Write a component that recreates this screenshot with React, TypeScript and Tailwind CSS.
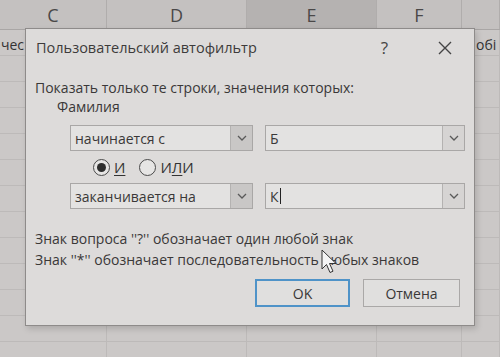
import React from "react";

const font = { fontFamily: '"Open Sans", "Noto Sans", sans-serif' };

function Chevron() {
  return (
    <svg width="10" height="6" viewBox="0 0 10 6" fill="none">
      <path d="M1 1l4 4 4-4" stroke="#5a5a5a" strokeWidth="1.3" />
    </svg>
  );
}

function Combo({ value, width, caret, dark }: { value: string; width: string; caret?: boolean; dark?: boolean }) {
  return (
    <div className={`flex h-[26px] ${width} border border-[#a9a7a6] bg-[#e3e2e1]`}>
      <div className="flex flex-1 items-center pl-[4px] text-[14px] text-[#3a3838]">
        {value}
        {caret && <span className="ml-[1px] h-[16px] w-[1px] bg-[#222]" />}
      </div>
      <div className={`flex w-[22px] items-center justify-center border-l border-[#b4b2b1] ${dark ? "bg-[#c9c7c6]" : "bg-[#d6d4d3]"}`}>
        <Chevron />
      </div>
    </div>
  );
}

function Radio({ checked, pre, u, post }: { checked?: boolean; pre: string; u: string; post: string }) {
  return (
    <div className="flex items-center gap-[4px]">
      <span className="flex h-[17px] w-[17px] items-center justify-center rounded-full border border-[#4a4a4a] bg-[#e6e5e4]">
        {checked && <span className="h-[9px] w-[9px] rounded-full bg-[#2e2e2e]" />}
      </span>
      <span className="text-[15px] text-[#333]">
        {pre}
        <span className="underline underline-offset-2">{u}</span>
        {post}
      </span>
    </div>
  );
}

export default function App() {
  const cols = [
    { w: "w-[107px]", l: "C", hl: false },
    { w: "w-[140px]", l: "D", hl: false },
    { w: "w-[130px]", l: "E", hl: true },
    { w: "w-[85px]", l: "F", hl: false },
    { w: "flex-1", l: "", hl: false },
  ];
  return (
    <div className="relative h-[357px] w-[500px] overflow-hidden bg-[#cbc8c7]" style={font}>
      {/* column headers */}
      <div className="flex h-[30px] border-b border-[#a9a6a5]">
        {cols.map((c, i) => (
          <div
            key={i}
            className={`${c.w} flex items-center justify-center border-r border-[#b0adac] pt-[2px] text-[18px] text-[#4a4848] ${c.hl ? "bg-[#b5b2b1]" : "bg-[#c4c1c0]"}`}
          >
            {c.l}
          </div>
        ))}
      </div>
      {/* sheet rows */}
      <div className="flex flex-col">
        {Array.from({ length: 14 }).map((_, r) => (
          <div key={r} className="flex h-[26px] border-b border-[#bdbab9]">
            {cols.map((c, i) => (
              <div key={i} className={`${c.w} flex items-center border-r border-[#bdbab9] text-[14px] text-[#333]`}>
                {r === 0 && i === 0 && <span className="pl-[1px] pt-[4px]">чес</span>}
                {r === 0 && i === 4 && <span className="pl-[14px] pt-[4px]">обі</span>}
              </div>
            ))}
          </div>
        ))}
      </div>

      {/* dialog */}
      <div className="absolute left-[25px] top-[28px] flex h-[298px] w-[450px] flex-col border border-[#8e8b8a] bg-[#dddbda] text-[#3a3838] shadow-[2px_3px_6px_rgba(0,0,0,0.15)]">
        <div className="flex h-[38px] items-center pl-[10px] pr-[22px]">
          <span className="flex-1 text-[14.5px] text-[#3d3b3b]">Пользовательский автофильтр</span>
          <span className="mr-[50px] text-[17px] text-[#444]">?</span>
          <svg width="14" height="14" viewBox="0 0 14 14">
            <path d="M1 1l12 12M13 1L1 13" stroke="#444" strokeWidth="1.4" />
          </svg>
        </div>
        <div className="flex flex-col px-[9px] pt-[11px]">
          <div className="text-[14px] leading-[20px]">Показать только те строки, значения которых:</div>
          <div className="pl-[22px] text-[14px] leading-[18px]">Фамилия</div>
          <div className="flex flex-col pl-[35px] pt-[9px]">
            <div className="flex gap-[12px]">
              <Combo value="начинается с" width="w-[183px]" dark />
              <Combo value="Б" width="w-[200px]" />
            </div>
            <div className="flex h-[32px] items-center gap-[14px] pl-[23px]">
              <Radio checked pre="" u="И" post="" />
              <Radio pre="И" u="Л" post="И" />
            </div>
            <div className="flex gap-[12px]">
              <Combo value="заканчивается на" width="w-[183px]" dark />
              <Combo value="К" width="w-[200px]" caret />
            </div>
          </div>
          <div className="pt-[19px] text-[14px] leading-[21px]">
            <div>Знак вопроса ''?'' обозначает один любой знак</div>
            <div>Знак ''*'' обозначает последовательность любых знаков</div>
          </div>
          <div className="flex justify-end gap-[13px] pr-[5px] pt-[9px]">
            <button className="flex h-[28px] w-[95px] items-center justify-center border-2 border-[#4f93c8] bg-[#e0dfde] text-[14px]">
              OK
            </button>
            <button className="flex h-[28px] w-[97px] items-center justify-center border border-[#aaa8a7] bg-[#e0dfde] text-[14px]">
              Отмена
            </button>
          </div>
        </div>
      </div>

      {/* mouse cursor */}
      <svg className="absolute left-[321px] top-[249px]" width="16" height="26" viewBox="0 0 16 26">
        <path d="M1 1v19l4.5-4.5 3.5 8 3-1.3-3.5-7.7H15z" fill="#f4f4f4" stroke="#333" strokeWidth="1" />
      </svg>
    </div>
  );
}
